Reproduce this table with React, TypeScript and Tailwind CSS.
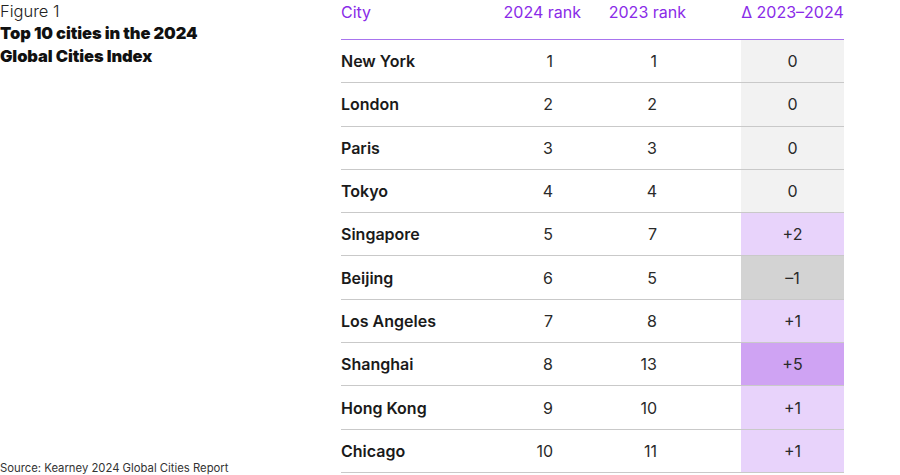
import React from "react";

type Row = { city: string; r24: number; r23: number; d: string; bg: string };

const rows: Row[] = [
  { city: "New York", r24: 1, r23: 1, d: "0", bg: "bg-[#f2f2f2]" },
  { city: "London", r24: 2, r23: 2, d: "0", bg: "bg-[#f2f2f2]" },
  { city: "Paris", r24: 3, r23: 3, d: "0", bg: "bg-[#f2f2f2]" },
  { city: "Tokyo", r24: 4, r23: 4, d: "0", bg: "bg-[#f2f2f2]" },
  { city: "Singapore", r24: 5, r23: 7, d: "+2", bg: "bg-[#e8d3fb]" },
  { city: "Beijing", r24: 6, r23: 5, d: "\u20131", bg: "bg-[#d3d3d3]" },
  { city: "Los Angeles", r24: 7, r23: 8, d: "+1", bg: "bg-[#e8d3fb]" },
  { city: "Shanghai", r24: 8, r23: 13, d: "+5", bg: "bg-[#cfa3f3]" },
  { city: "Hong Kong", r24: 9, r23: 10, d: "+1", bg: "bg-[#e8d3fb]" },
  { city: "Chicago", r24: 10, r23: 11, d: "+1", bg: "bg-[#e8d3fb]" },
];

export default function App() {
  return (
    <div
      className="flex w-[900px] h-[475px] bg-white text-[#222] overflow-hidden"
      style={{ fontFamily: "Inter, 'Open Sans', sans-serif" }}
    >
      <div className="w-[341px] h-[475px] flex flex-col justify-between shrink-0">
        <div>
          <div className="text-[16.5px] leading-[22px] font-light text-[#222]">Figure 1</div>
          <div className="text-[16.5px] leading-[23px] font-black text-[#111] tracking-[-0.1px]">
            Top 10 cities in the 2024
            <br />
            Global Cities Index
          </div>
        </div>
        <div className="text-[11.3px] leading-[14px] text-[#333]">
          Source: Kearney 2024 Global Cities Report
        </div>
      </div>

      <div className="w-[503px] shrink-0 flex flex-col">
        <div className="flex h-[40px] items-start pt-0 text-[16px] leading-[24px] text-[#8a2be8] border-b-[1.5px] border-[#a874ee]">
          <div className="w-[136px]">City</div>
          <div className="w-[104px] text-right">2024 rank</div>
          <div className="w-[105px] text-right">2023 rank</div>
          <div className="w-[55px]"></div>
          <div className="w-[103px] text-center whitespace-nowrap">Δ 2023–2024</div>
        </div>
        {rows.map((r) => (
          <div
            key={r.city}
            className="flex h-[43.3px] items-stretch border-b border-[#c9c9c9] text-[16px]"
          >
            <div className="w-[136px] flex items-center font-semibold text-[#1a1a1a]">{r.city}</div>
            <div className="w-[104px] flex items-center justify-end pr-[28px] text-[#2a2a2a]">{r.r24}</div>
            <div className="w-[105px] flex items-center justify-end pr-[29px] text-[#2a2a2a]">{r.r23}</div>
            <div className="w-[55px]"></div>
            <div className={`w-[103px] flex items-center justify-center text-[#2a2a2a] ${r.bg}`}>{r.d}</div>
          </div>
        ))}
      </div>
    </div>
  );
}
